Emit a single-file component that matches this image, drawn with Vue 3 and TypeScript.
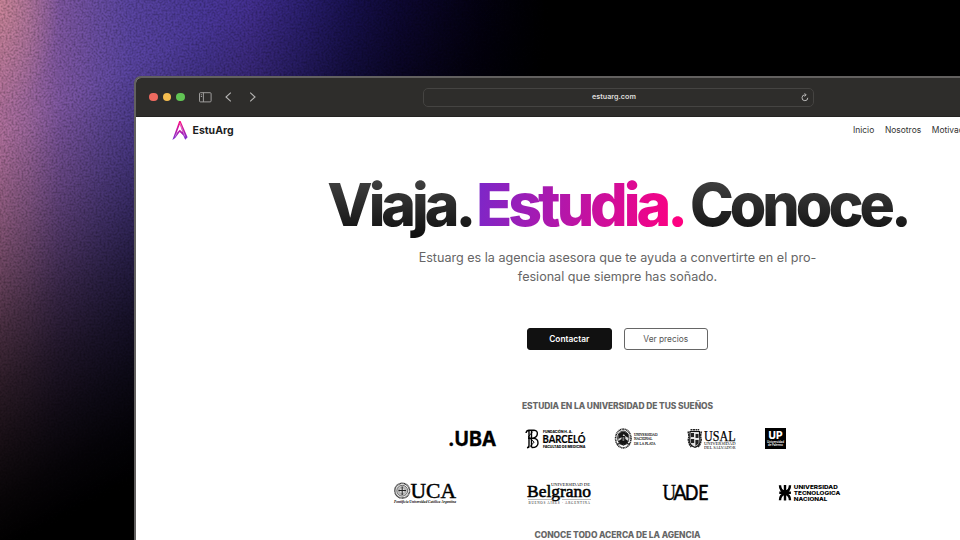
<script setup lang="ts">
const links: string[] = ['Inicio', 'Nosotros', 'Motivación']
const lights: string[] = ['red', 'yellow', 'green']
const rays: number[] = Array.from({ length: 24 }, (_, i) => i * 15)
</script>

<template>
  <div class="scene">
    <svg class="grain" width="960" height="540" aria-hidden="true">
      <filter id="noise" x="0" y="0" width="100%" height="100%">
        <feTurbulence type="fractalNoise" baseFrequency="0.5" numOctaves="2" seed="4" />
        <feColorMatrix values="0 0 0 0 0  0 0 0 0 0  0 0 0 0 0  1.5 0 0 0 -0.55" />
      </filter>
      <rect width="960" height="540" filter="url(#noise)" />
    </svg>
    <div class="window">
      <header class="toolbar">
        <div class="controls">
          <div class="lights">
            <i v-for="c in lights" :key="c" :class="c"></i>
          </div>
          <svg class="sidebar" width="13" height="11" viewBox="0 0 13 11" fill="none" stroke="#aaa9a8">
            <rect x=".5" y=".7" width="11.6" height="9.2" rx="1" stroke-width=".9" />
            <path d="M4.4.7v9.2M1.8 2.8h1.3M1.8 4.5h1.3" stroke-width=".9" />
          </svg>
          <svg class="back" width="7" height="10" viewBox="0 0 7 10" fill="none" stroke="#b5b4b3" stroke-width="1.1"><path d="M5.8.7 1 5l4.800 4.300" /></svg>
          <svg class="forward" width="7" height="10" viewBox="0 0 7 10" fill="none" stroke="#b5b4b3" stroke-width="1.1"><path d="M1.200.7 6 5 1.200 9.300" /></svg>
        </div>
        <div class="address">
          <span>estuarg.com</span>
          <svg width="8" height="9" viewBox="0 0 8 9" fill="none" stroke="#b8b7b6" stroke-width="1"><path d="M6.800 4.800A2.900 2.900 0 1 1 4 1.900h.8M3.600.3 5.200 1.900 3.600 3.500" /></svg>
        </div>
      </header>

      <main class="page">
        <nav class="nav">
          <div class="brand">
            <svg width="16" height="19" viewBox="0 0 16 19">
              <defs>
                <linearGradient id="mark" x1="0" y1="0" x2="0" y2="1">
                  <stop offset="0" stop-color="#ff1280" />
                  <stop offset=".5" stop-color="#bd18aa" />
                  <stop offset="1" stop-color="#7630d2" />
                </linearGradient>
              </defs>
              <path fill="url(#mark)" fill-rule="evenodd" d="M7.200 0h1.400l7 16.300-2.400 2.500-1.900-4.400-3.600-3.400-4.500 6L.4 19ZM7.800 3.600 4.600 12l3.200-3.300 2.700 2.500Z" />
              <path d="M8 2.200l5 13.300M5 11.500 3.200 15.500" fill="none" stroke="#fff" stroke-width=".4" />
            </svg>
            <span>EstuArg</span>
          </div>
          <div class="links"><a v-for="l in links" :key="l">{{ l }}</a></div>
        </nav>

        <h1 class="title"><span class="dark">Viaja.</span><span class="vivid">Estudia.</span><span class="dark">Conoce.</span></h1>
        <p class="lead">Estuarg es la agencia asesora que te ayuda a convertirte en el pro-<br />fesional que siempre has soñado.</p>
        <div class="actions">
          <button class="primary">Contactar</button>
          <button class="secondary">Ver precios</button>
        </div>

        <h2 class="section">ESTUDIA EN LA UNIVERSIDAD DE TUS SUEÑOS</h2>
        <div class="row first">
          <svg width="48" height="22" viewBox="0 0 48 22">
            <text x="-1" y="17.500" class="sans" font-size="20.500" font-weight="700" stroke="#000" stroke-width=".3" textLength="48.500" lengthAdjust="spacingAndGlyphs">.UBA</text>
          </svg>
          <svg width="62" height="22" viewBox="0 0 62 22">
            <g fill="none" stroke="#000">
              <path d="M4 1.500v16q0 2-2 2.300M6.500 1.500v18M1 5Q1.500 2 4.500 2.200H9q3.800.4 3.300 4-.4 3.200-4.500 4 5.400.2 5.200 5-.2 4.400-6.300 4.300M3 10.300h6" stroke-width="1.400" />
              <path d="M7.800 3.500 3.200 9l6 5-5 5.500" stroke-width=".9" />
            </g>
            <text x="18" y="4.700" class="sans" font-size="3.600" font-weight="800" textLength="29.500" lengthAdjust="spacingAndGlyphs">FUNDACIÓN H. A.</text>
            <text x="17.500" y="14.600" class="lato" font-size="10.500" font-weight="700" stroke="#000" stroke-width=".2" textLength="43" lengthAdjust="spacingAndGlyphs">BARCELÓ</text>
            <text x="18" y="19.500" class="sans" font-size="3.600" font-weight="800" textLength="42.500" lengthAdjust="spacingAndGlyphs">FACULTAD DE MEDICINA</text>
          </svg>
          <svg width="44" height="22" viewBox="0 0 44 22">
            <ellipse cx="8.300" cy="10.500" rx="7.700" ry="9.400" fill="#fff" stroke="#222" stroke-width="1.600" stroke-dasharray="1.100 .5" />
            <ellipse cx="8.300" cy="10" rx="5.700" ry="7" fill="#d9d9d9" stroke="#222" stroke-width=".9" />
            <path d="M3.500 6q4.800-5 9.600 0l.5 4-3.500-2-1.300-2-1.800 3-3.700 2ZM3.500 13l3-2 1.800 2 2-2 3 2-2.500 3.500H5.800Z" fill="#171717" />
            <path d="M7 8.500h2.800v5H7ZM2 16.500l3-1.500 3.300 2 3.500-2 3 1.500" stroke="#111" fill="#777" stroke-width="1" />
            <text x="19" y="7.800" class="serif" font-size="5" textLength="23.500" stroke="#000" stroke-width=".12" lengthAdjust="spacingAndGlyphs">UNIVERSIDAD</text>
            <text x="19" y="12.300" class="serif" font-size="5" textLength="18.500" stroke="#000" stroke-width=".12" lengthAdjust="spacingAndGlyphs">NACIONAL</text>
            <text x="19" y="16.800" class="serif" font-size="5" textLength="21.500" stroke="#000" stroke-width=".12" lengthAdjust="spacingAndGlyphs">DE LA PLATA</text>
          </svg>
          <svg width="50" height="22" viewBox="0 0 50 22">
            <path d="M3 3.500h9.500l.5 11q-1.500 4-5.200 4.800Q3.700 18 2.700 14.500Z" fill="#ddd" stroke="#111" stroke-width="1.200" />
            <path d="M1 3.500q1.500 4 .3 7.500.2 5 3 8M14.500 3.500q-1.500 4-.3 7.500-.2 5-3 8M3.500 1.800h8.700" fill="none" stroke="#222" stroke-width="1.500" stroke-dasharray="2 .5" />
            <path d="M4 5h3v4H4Zm4.500 1h3v4h-3ZM4 11h3.300v4H4Zm4.300 1h3.300v3.500L8.300 18Z" fill="#222" />
            <path d="M7.800 4v14M3.500 10.400h8.500" stroke="#fff" stroke-width=".5" />
            <text x="17" y="12.800" class="serif" font-size="15" stroke="#000" stroke-width=".25" textLength="31.500" lengthAdjust="spacingAndGlyphs">USAL</text>
            <text x="17" y="17.200" class="serif" font-size="4.500" textLength="31.500" lengthAdjust="spacingAndGlyphs">UNIVERSIDAD</text>
            <text x="17" y="21.400" class="serif" font-size="4.500" textLength="31.500" lengthAdjust="spacingAndGlyphs">DEL SALVADOR</text>
          </svg>
          <svg width="21" height="21" viewBox="0 0 21 21">
            <rect width="21" height="21" fill="#000" />
            <text x="3.600" y="11" class="sans" font-size="10.500" font-weight="800" fill="#fff" textLength="14" lengthAdjust="spacingAndGlyphs">UP</text>
            <text x="2" y="14.800" class="sans" font-size="3.200" font-weight="600" fill="#fff" textLength="17" lengthAdjust="spacingAndGlyphs">Universidad</text>
            <text x="3" y="18.400" class="sans" font-size="3.200" font-weight="600" fill="#fff" textLength="15" lengthAdjust="spacingAndGlyphs">de Palermo</text>
          </svg>
        </div>
        <div class="row second">
          <svg width="64" height="22" viewBox="0 0 64 22">
            <circle cx="9.200" cy="8.700" r="7.400" fill="#f1f1f1" stroke="#333" stroke-width="1.500" stroke-dasharray="1 .35" />
            <circle cx="9.200" cy="8.700" r="5.400" fill="#ddd" stroke="#333" stroke-width=".7" />
            <path v-for="a in rays" :key="a" d="M9.200 4.200v2" :transform="`rotate(${a} 9.200 8.700)`" stroke="#666" stroke-width=".4" />
            <path d="M9.200 4.500v8.500M5.500 8.500H13" stroke="#222" stroke-width="1" />
            <text x="17.500" y="15.500" class="serif" font-size="20.500" stroke="#000" stroke-width=".45" textLength="45.500" lengthAdjust="spacingAndGlyphs">UCA</text>
            <text x="1" y="20.500" class="serif" font-size="3.400" font-weight="700" font-style="italic" textLength="62" lengthAdjust="spacingAndGlyphs">Pontificia Universidad Católica Argentina</text>
          </svg>
          <svg width="66" height="23" viewBox="0 0 66 23">
            <text x="24" y="4" class="serif" font-size="4.600" textLength="39" lengthAdjust="spacingAndGlyphs">UNIVERSIDAD DE</text>
            <text x="0" y="14.500" class="serif" font-size="17.500" stroke="#000" stroke-width=".55" textLength="64" lengthAdjust="spacingAndGlyphs">Belgrano</text>
            <path d="M1 17.500h26M35 17.500h29" stroke="#777" stroke-width=".5" />
            <text x="1.500" y="21.700" class="serif" font-size="3.300" fill="#222" textLength="61.500">BUENOS AIRES · ARGENTINA</text>
          </svg>
          <svg width="46" height="22" viewBox="0 0 46 22">
            <text x="-.5" y="18" class="serif" font-size="23" stroke="#000" stroke-width=".4" textLength="13.500" lengthAdjust="spacingAndGlyphs">U</text>
            <text x="10.500" y="18" class="lato" font-size="20.500" stroke="#000" stroke-width=".5" textLength="13" lengthAdjust="spacingAndGlyphs">A</text>
            <text x="22" y="18" class="lato" font-size="20.500" stroke="#000" stroke-width=".6" textLength="23.500" lengthAdjust="spacingAndGlyphs">DE</text>
          </svg>
          <svg width="64" height="22" viewBox="0 0 64 22">
            <path d="M6 3v15.500M.3 10.700h11.600M1 3.200q0 5.700 5 6.500 5-.8 5-6.500M1 18.300q0-5.700 5-6.600 5 .9 5 6.600" fill="none" stroke="#000" stroke-width="2.400" />
            <text x="14.800" y="7.400" class="sans" font-size="5.200" font-weight="800" textLength="44" lengthAdjust="spacingAndGlyphs">UNIVERSIDAD</text>
            <text x="14.800" y="13" class="sans" font-size="5.200" font-weight="800" textLength="46.500" lengthAdjust="spacingAndGlyphs">TECNOLOGICA</text>
            <text x="14.800" y="18.500" class="sans" font-size="5.200" font-weight="800" textLength="33.500" lengthAdjust="spacingAndGlyphs">NACIONAL</text>
          </svg>
        </div>
        <h2 class="section about">CONOCE TODO ACERCA DE LA AGENCIA</h2>
      </main>
    </div>
  </div>
</template>

<style>
body { margin: 0; overflow: hidden; background: #000; }
</style>

<style scoped>
* { box-sizing: border-box; }
.scene {
  position: relative; width: 960px; height: 540px; overflow: hidden;
  padding: 76px 0 0 134px; font-family: Inter, "Liberation Sans", sans-serif;
  background:
    linear-gradient(152deg, transparent 120px, rgba(0,0,0,.22) 195px, rgba(0,0,0,.4) 245px, rgba(0,0,0,.58) 290px, rgba(0,0,0,.74) 340px, rgba(0,0,0,.86) 390px, rgba(0,0,0,.95) 440px, #000 490px),
    radial-gradient(ellipse 60px 110px at 0 0, rgba(230,155,150,.5), transparent),
    linear-gradient(90deg, #b0709c 0, #9e689f 28px, #7f57a2 60px, #684da3 100px, #5a45a2 130px, #4a389a 200px, #443092 250px, #30237c 300px, #1c145c 350px, #110a40 400px, #05021a 480px, #000 550px);
}
.grain { position: absolute; left: 0; top: 0; opacity: .4; }
.window {
  position: relative; width: 967px; height: 520px; border: 2px solid #62605f;
  border-radius: 7px 7px 0 0; overflow: hidden; background: #fff;
}
.toolbar { height: 39px; background: #2e2d2b; border-bottom: 1px solid #242321; display: flex; align-items: center; padding: 0 0 0 13px; }
.controls { display: flex; align-items: center; width: 274px; }
.lights { display: flex; gap: 5px; }
.lights i { width: 8.500px; height: 8.500px; border-radius: 50%; }
.red { background: #ed6a5f; }
.yellow { background: #f5bd4f; }
.green { background: #61c454; }
.sidebar { margin-left: 14px; }
.back { margin-left: 13px; }
.forward { margin-left: 17px; }
.address {
  width: 391px; height: 19px; border: 1px solid #454442; border-radius: 5px; position: relative;
  display: flex; align-items: center; justify-content: flex-end; padding-right: 4px;
}
.address span { flex: 1; text-align: center; padding-left: 3px; font-size: 7.200px; line-height: 16px; margin-bottom: 1px; font-weight: 600; color: #dedddc; }
.page { display: flex; flex-direction: column; align-items: center; }
.nav { height: 27px; align-self: stretch; display: flex; align-items: center; justify-content: space-between; padding: 0 0 0 36px; }
.brand { display: flex; align-items: center; gap: 4.500px; font-weight: 700; font-size: 10.500px; color: #1d1d1d; }
.links { display: flex; gap: 10.700px; width: 246px; font-size: 8.450px; line-height: 14px; margin-bottom: 1px; color: #333; }
.title { margin: 24px 0 0; height: 74px; display: flex; justify-content: center; font-size: 59px; line-height: 74px; font-weight: 800; letter-spacing: -4px; white-space: nowrap; }
.title span { background-clip: text; -webkit-background-clip: text; color: transparent; padding-right: 4px; margin-right: -4px; }
.title .dark { background-image: linear-gradient(#444 10%, #111 90%); }
.title .vivid { background-image: linear-gradient(100deg, #7928ca 0%, #ff0080 95%); margin: 0 2px 0 4px; }
.lead { margin: 6px 0 0; font-size: 12.580px; line-height: 19px; color: #666; text-align: center; white-space: nowrap; }
.actions { display: flex; gap: 12px; margin-top: 42px; }
.actions button { width: 84.500px; height: 22px; padding: 0; border-radius: 3px; font: 600 8.350px/20px Inter, sans-serif; }
.actions .primary { background: #111; color: #fff; border: 1px solid #111; padding-bottom: 1px; }
.actions .secondary { background: #fff; color: #555; border: 1px solid #666; font-weight: 400; }
.section { margin: 49px 0 0; font-size: 8.450px; line-height: 14px; font-weight: 800; letter-spacing: -.08px; color: #666; white-space: nowrap; }
.row { display: flex; align-items: flex-start; }
.row svg { overflow: visible; flex: none; }
.first { margin-top: 15px; gap: 28px; }
.second { margin-top: 32px; gap: 70px; }
.section.about { margin-top: 23px; }
.sans { font-family: Inter, sans-serif; }
.lato { font-family: Lato, sans-serif; }
.serif { font-family: "Liberation Serif", serif; }
</style>
